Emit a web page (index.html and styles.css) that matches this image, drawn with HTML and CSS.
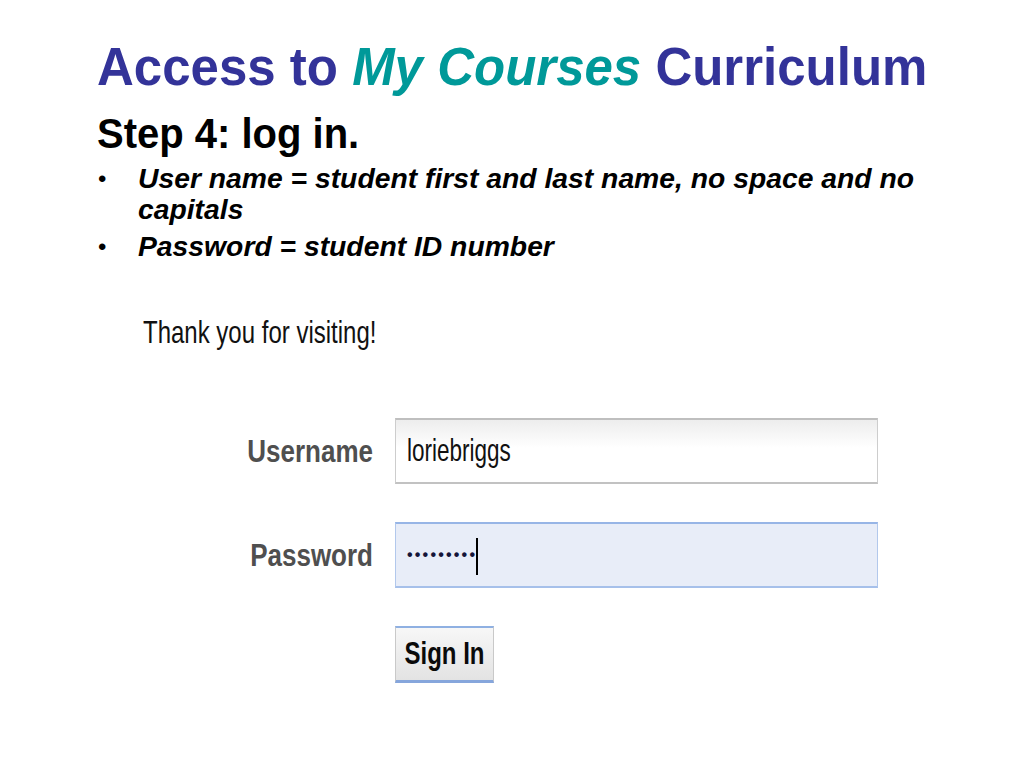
FILE: index.html
```html
<!DOCTYPE html>
<html lang="en">
<head>
<meta charset="utf-8">
<title>Access to My Courses Curriculum</title>
<link rel="stylesheet" href="styles.css">
</head>
<body>
<main class="slide">
  <h1 class="title"><span class="tall">Access to <em class="accent">My Courses</em> Curriculum</span></h1>
  <h2 class="step"><span class="tall">Step 4: log in.</span></h2>
  <ul class="bullets">
    <li><span class="dot">•</span><span class="item">User name = student first and last name, no space and no capitals</span></li>
    <li><span class="dot">•</span><span class="item">Password = student ID number</span></li>
  </ul>

  <section class="login">
    <p class="thanks"><span class="stretch">Thank you for visiting!</span></p>
    <div class="form">
      <div class="label"><span class="stretch">Username</span></div>
      <div class="field user"><span class="stretch value">loriebriggs</span></div>

      <div class="label"><span class="stretch">Password</span></div>
      <div class="field pass"><span class="dots">•••••••••</span><span class="caret"></span></div>

      <div class="spacer"></div>
      <div class="btn-cell"><div class="btn"><span class="stretch">Sign In</span></div></div>
    </div>
  </section>
</main>
</body>
</html>
```

FILE: styles.css
```css
html, body {
  margin: 0;
  padding: 0;
  background: #ffffff;
}

body {
  width: 1024px;
  height: 768px;
  overflow: hidden;
  font-family: "Liberation Sans", Arial, sans-serif;
}

.slide {
  padding: 37px 0 0 97px;
}

.tall {
  display: inline-block;
  transform-origin: left center;
}

.title {
  margin: 0;
  font-size: 51px;
  line-height: 60px;
  font-weight: bold;
  color: #333399;
  white-space: nowrap;
}

.title .tall {
  transform: scaleY(1.05);
}

.accent {
  color: #009999;
  font-style: italic;
}

.step {
  margin: 12px 0 0 0;
  font-size: 40px;
  line-height: 48px;
  font-weight: bold;
  color: #000000;
}

.step .tall {
  transform: scaleY(1.08);
}

.bullets {
  list-style: none;
  margin: 6px 0 0 0;
  padding: 0;
  width: 830px;
}

.bullets li {
  display: flex;
  font-size: 28.3px;
  line-height: 31px;
  font-weight: bold;
  color: #000000;
}

.bullets li + li {
  margin-top: 6px;
}

.dot {
  flex: 0 0 40px;
  font-style: normal;
  font-weight: normal;
  font-size: 24px;
  padding-left: 1px;
}

.item {
  font-style: italic;
}

.login {
  margin-top: 56px;
}

.stretch {
  display: inline-block;
  transform-origin: center center;
}

.thanks {
  margin: 0 0 0 46px;
  font-size: 24px;
  line-height: 30px;
  color: #111111;
}

.thanks .stretch {
  transform: scaleY(1.3);
}

.form {
  margin-top: 70px;
  display: grid;
  grid-template-columns: 276px 483px;
  grid-auto-rows: 66px;
  column-gap: 22px;
  row-gap: 38px;
}

.label {
  display: flex;
  align-items: center;
  justify-content: flex-end;
  font-size: 26px;
  font-weight: bold;
  color: #4f4f4f;
}

.label .stretch {
  transform: scaleY(1.2);
}

.field {
  box-sizing: border-box;
  display: flex;
  align-items: center;
  padding-left: 11px;
}

.user {
  border: 1px solid #cdcdcd;
  border-top: 2px solid #bfbfbf;
  border-bottom: 2px solid #c2c2c2;
  background: linear-gradient(#ededed 0%, #ffffff 45%);
}

.value {
  font-size: 22.5px;
  color: #111111;
  transform: scaleY(1.4);
}

.pass {
  border: 1px solid #b2c8ec;
  border-top: 2px solid #97b5e6;
  border-bottom: 2px solid #a6c0ea;
  background: #e8edf8;
}

.dots {
  font-size: 16px;
  letter-spacing: 2.2px;
  color: #15153a;
  font-weight: bold;
}

.caret {
  width: 2px;
  height: 37px;
  margin-top: 3px;
  background: #000000;
  margin-left: -1px;
}

.btn-cell {
  display: flex;
  align-items: flex-start;
}

.btn {
  box-sizing: border-box;
  width: 99px;
  height: 57px;
  display: flex;
  align-items: center;
  justify-content: center;
  border-left: 1px solid #c9c9c9;
  border-right: 1px solid #c9c9c9;
  border-top: 2px solid #8fb0e2;
  border-bottom: 3px solid #86a6dc;
  background: linear-gradient(#f7f7f7, #e3e3e3);
  font-size: 24px;
  font-weight: bold;
  color: #0a0a0a;
}

.btn .stretch {
  transform: scaleY(1.3);
}
```
